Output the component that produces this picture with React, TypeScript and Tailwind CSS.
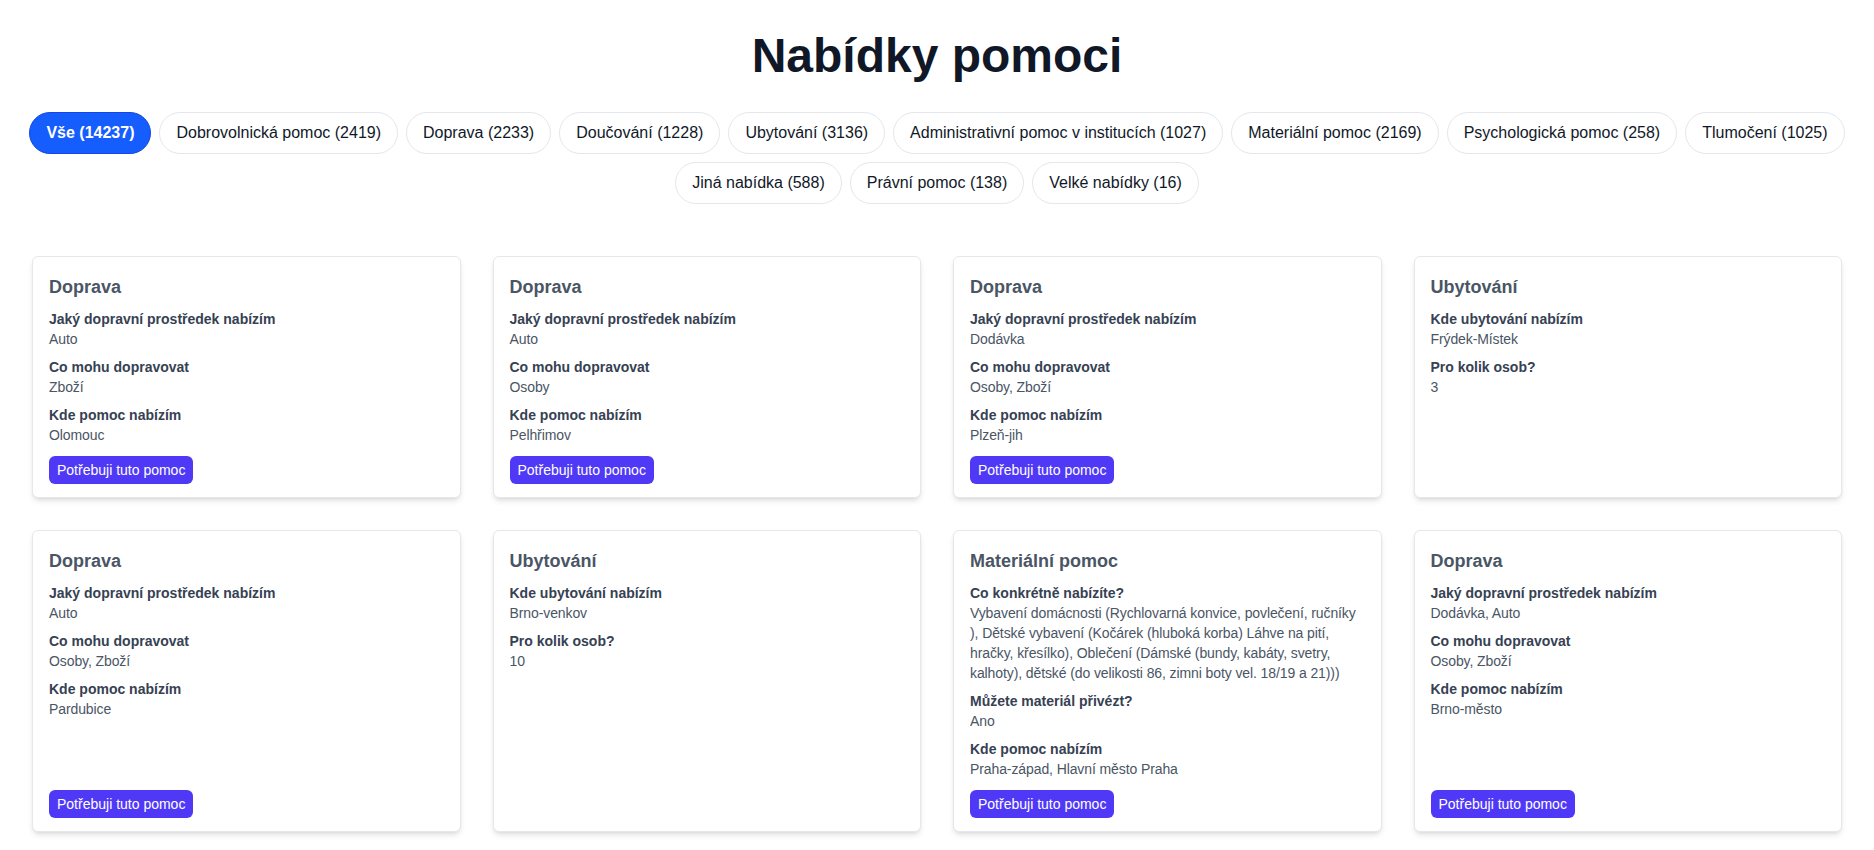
import React from "react";

type Field = { label: string; value: string };
type Offer = { title: string; fields: Field[]; canRequest?: boolean };

const categories = [
  "Vše (14237)",
  "Dobrovolnická pomoc (2419)",
  "Doprava (2233)",
  "Doučování (1228)",
  "Ubytování (3136)",
  "Administrativní pomoc v institucích (1027)",
  "Materiální pomoc (2169)",
  "Psychologická pomoc (258)",
  "Tlumočení (1025)",
  "Jiná nabídka (588)",
  "Právní pomoc (138)",
  "Velké nabídky (16)",
];

const offers: Offer[] = [
  {
    title: "Doprava",
    canRequest: true,
    fields: [
      { label: "Jaký dopravní prostředek nabízím", value: "Auto" },
      { label: "Co mohu dopravovat", value: "Zboží" },
      { label: "Kde pomoc nabízím", value: "Olomouc" },
    ],
  },
  {
    title: "Doprava",
    canRequest: true,
    fields: [
      { label: "Jaký dopravní prostředek nabízím", value: "Auto" },
      { label: "Co mohu dopravovat", value: "Osoby" },
      { label: "Kde pomoc nabízím", value: "Pelhřimov" },
    ],
  },
  {
    title: "Doprava",
    canRequest: true,
    fields: [
      { label: "Jaký dopravní prostředek nabízím", value: "Dodávka" },
      { label: "Co mohu dopravovat", value: "Osoby, Zboží" },
      { label: "Kde pomoc nabízím", value: "Plzeň-jih" },
    ],
  },
  {
    title: "Ubytování",
    fields: [
      { label: "Kde ubytování nabízím", value: "Frýdek-Místek" },
      { label: "Pro kolik osob?", value: "3" },
    ],
  },
  {
    title: "Doprava",
    canRequest: true,
    fields: [
      { label: "Jaký dopravní prostředek nabízím", value: "Auto" },
      { label: "Co mohu dopravovat", value: "Osoby, Zboží" },
      { label: "Kde pomoc nabízím", value: "Pardubice" },
    ],
  },
  {
    title: "Ubytování",
    fields: [
      { label: "Kde ubytování nabízím", value: "Brno-venkov" },
      { label: "Pro kolik osob?", value: "10" },
    ],
  },
  {
    title: "Materiální pomoc",
    canRequest: true,
    fields: [
      {
        label: "Co konkrétně nabízíte?",
        value:
          "Vybavení domácnosti (Rychlovarná konvice, povlečení, ručníky ), Dětské vybavení (Kočárek (hluboká korba) Láhve na pití, hračky, křesílko), Oblečení (Dámské (bundy, kabáty, svetry, kalhoty), dětské (do velikosti 86, zimni boty vel. 18/19 a 21)))",
      },
      { label: "Můžete materiál přivézt?", value: "Ano" },
      { label: "Kde pomoc nabízím", value: "Praha-západ, Hlavní město Praha" },
    ],
  },
  {
    title: "Doprava",
    canRequest: true,
    fields: [
      { label: "Jaký dopravní prostředek nabízím", value: "Dodávka, Auto" },
      { label: "Co mohu dopravovat", value: "Osoby, Zboží" },
      { label: "Kde pomoc nabízím", value: "Brno-město" },
    ],
  },
];

function OfferCard({ offer }: { offer: Offer }) {
  return (
    <div className="flex flex-col rounded-md border border-gray-200 bg-white px-4 pb-[13px] pt-4 shadow-md">
      <h2 className="mb-2 text-lg font-bold leading-7 text-gray-600">{offer.title}</h2>
      <div className="flex flex-col gap-2">
        {offer.fields.map((f) => (
          <div key={f.label} className="text-sm leading-5">
            <p className="font-bold text-gray-700">{f.label}</p>
            <p className="tracking-[-0.1px] text-gray-600">{f.value}</p>
          </div>
        ))}
      </div>
      {offer.canRequest && (
        <div className="mt-auto pt-[11px]">
          <button className="rounded-md bg-indigo-600 px-2 py-1 text-sm leading-5 text-white">
            Potřebuji tuto pomoc
          </button>
        </div>
      )}
    </div>
  );
}

export default function App() {
  return (
    <div
      className="min-h-screen bg-white pb-6 pt-8"
      style={{ fontFamily: '"Liberation Sans", Arial, sans-serif' }}
    >
      <h1 className="mb-8 text-center text-5xl font-black leading-none text-gray-900">
        Nabídky pomoci
      </h1>

      {/* Category filter */}
      <div className="flex flex-wrap justify-center gap-2 px-4">
        {categories.map((c, i) => (
          <button
            key={c}
            className={
              i === 0
                ? "rounded-full border border-blue-700 bg-blue-600 px-4 py-2 text-base font-semibold leading-6 text-white"
                : "rounded-full border border-gray-200 bg-white px-4 py-2 text-base leading-6 text-gray-900"
            }
          >
            {c}
          </button>
        ))}
      </div>

      {/* Offers */}
      <div className="mt-[52px] grid grid-cols-4 gap-8 px-8">
        {offers.map((o, i) => (
          <OfferCard key={i} offer={o} />
        ))}
      </div>
    </div>
  );
}
